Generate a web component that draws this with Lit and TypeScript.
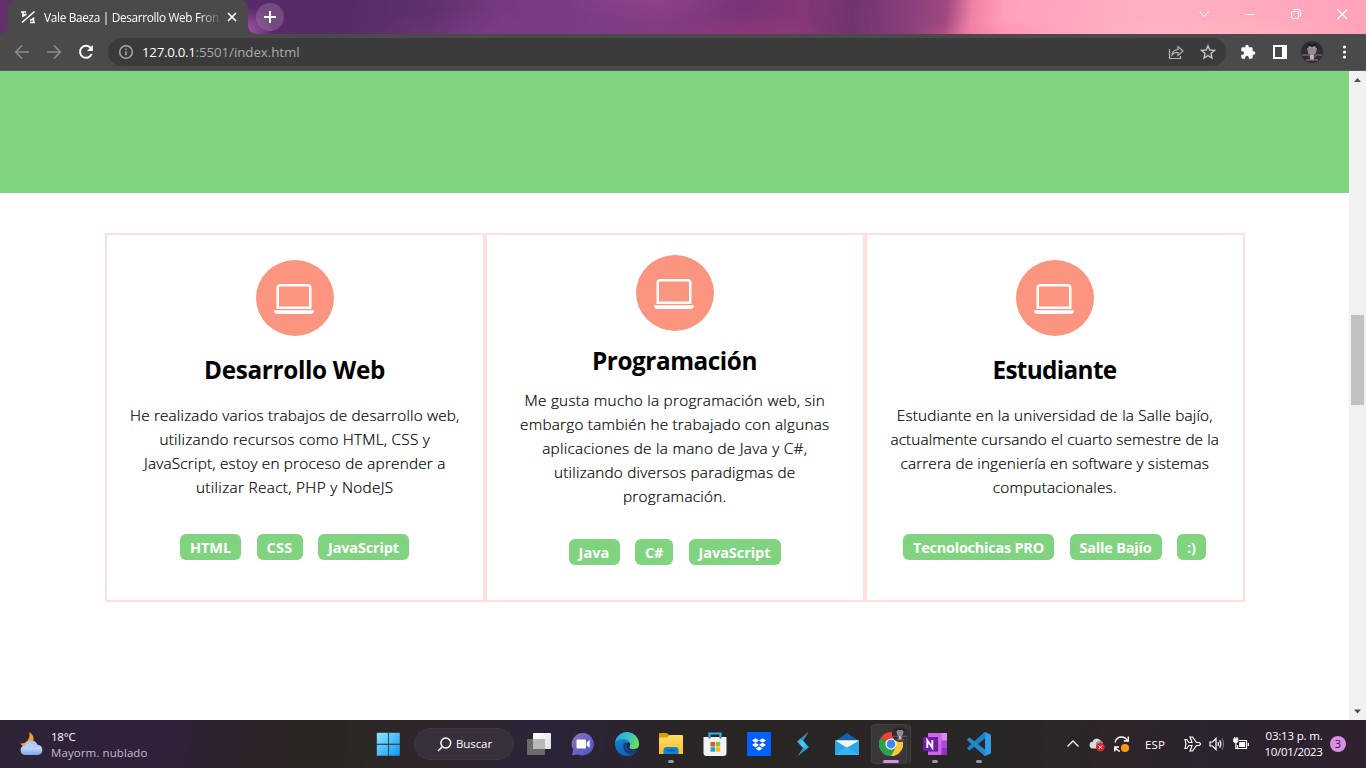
import { LitElement, html, svg, css } from "lit";
import { customElement, property } from "lit/decorators.js";

/** A single line of text whose tracking is adjusted to a given measure. */
@customElement("fit-text")
class FitText extends LitElement {
  @property({ type: Number }) measure = 0;
  @property() text = "";

  static styles = css`
    :host { display: block; width: max-content; white-space: pre; }
    .t { display: inline-block; }
  `;

  render() {
    return html`<span class="t">${this.text}</span>`;
  }

  firstUpdated() {
    const span = this.renderRoot.querySelector(".t") as HTMLElement;
    const natural = span.getBoundingClientRect().width;
    const spacing = (this.measure - natural) / this.text.length;
    span.style.letterSpacing = spacing.toFixed(3) + "px";
  }
}

type Line = [string, number];
interface Card { title: Line; lines: Line[]; tags: [string, number][]; tight?: boolean }

const CARDS: Card[] = [
  {
    title: ["Desarrollo Web", 181],
    lines: [
      ["He realizado varios trabajos de desarrollo web,", 329.5],
      ["utilizando recursos como HTML, CSS y", 270.5],
      ["JavaScript, estoy en proceso de aprender a", 301.5],
      ["utilizar React, PHP y NodeJS", 197.5],
    ],
    tags: [["HTML", 61], ["CSS", 46], ["JavaScript", 91]],
  },
  {
    title: ["Programación", 165],
    lines: [
      ["Me gusta mucho la programación web, sin", 300.5],
      ["embargo también he trabajado con algunas", 309.5],
      ["aplicaciones de la mano de Java y C#,", 265],
      ["utilizando diversos paradigmas de", 241.5],
      ["programación.", 103.5],
    ],
    tags: [["Java", 51], ["C#", 38], ["JavaScript", 92]],
    tight: true,
  },
  {
    title: ["Estudiante", 124],
    lines: [
      ["Estudiante en la universidad de la Salle bajío,", 316],
      ["actualmente cursando el cuarto semestre de la", 328.5],
      ["carrera de ingeniería en software y sistemas", 308.5],
      ["computacionales.", 124],
    ],
    tags: [["Tecnolochicas PRO", 151], ["Salle Bajío", 92], [":)", 29]],
  },
];

const laptop = svg`<svg width="40" height="40" viewBox="0 0 16 16" fill="#fff">
  <path d="M13.5 3a.5.5 0 0 1 .5.5V11H2V3.5a.5.5 0 0 1 .5-.5h11zm-11-1A1.5 1.5 0 0 0 1 3.5V12h14V3.5A1.5 1.5 0 0 0 13.5 2h-11zM0 12.5h16a1.5 1.5 0 0 1-1.5 1.5h-13A1.5 1.5 0 0 1 0 12.5z"/></svg>`;

const portrait = svg`
  <circle cx="11" cy="11" r="11" fill="#302c33"/>
  <path d="M5 6l3-3 3 1 3-1 3 3-1 3H6z" fill="#1b1a1f"/>
  <path d="M6 7q5-2 10 0l-1 5-4 5-4-5z" fill="#94898f"/>
  <path d="M7.500 6h2.500M12 6h2.500" stroke="#d5ccd0" stroke-width="1"/>
  <path d="M1 14h6l3 2h3l3-2h5" stroke="#6b6168" stroke-width="1.500" fill="none"/>
  <path d="M9.500 14h3l.5 4.500h-4z" fill="#c9bfc6"/>
  <path d="M5 19h12" stroke="#877c84" stroke-width="1.200"/>`;

@customElement("browser-bar")
class BrowserBar extends LitElement {
  static styles = css`
    :host { display: block; font-family: "Open Sans", "Noto Sans", sans-serif; }
    svg { display: block; flex: none; }
    .strip {
      height: 34px; display: flex; align-items: flex-start; box-sizing: border-box;
      background:
        radial-gradient(ellipse 150px 18px at 1230px 34px, rgba(255,190,190,.45), transparent),
        radial-gradient(ellipse 80px 16px at 990px 36px, rgba(255,120,165,.35), transparent),
        radial-gradient(ellipse 90px 26px at 750px 38px, rgba(165,62,125,.5), transparent),
        radial-gradient(ellipse 90px 26px at 645px -4px, rgba(165,72,152,.4), transparent),
        radial-gradient(ellipse 110px 28px at 470px 38px, rgba(140,66,145,.3), transparent),
        radial-gradient(ellipse 25px 22px at 249px 30px, rgba(160,88,168,.9), transparent),
        linear-gradient(96deg, #65306f 0, #5a2a68 240px, #552a69 330px, #60306f 430px, #773a80 500px, #7c3d85 600px, #843d84 660px, #7a3378 740px, #833777 800px, #71346f 850px, #8c407e 910px, #a1487f 942px, #ef80a5 968px, #ffa0ba 1000px, #ffb0c3 1150px, #ffa2ba 1366px);
    }
    .tab {
      position: relative; box-sizing: border-box; width: 240px; height: 34px; margin-left: 8px;
      padding: 0 10px 0 12px; border-radius: 8px 8px 0 0; background: #4a4a4a;
      display: flex; align-items: center; color: #fff;
    }
    .tab::before, .tab::after { content: ""; position: absolute; bottom: 0; width: 8px; height: 8px; }
    .tab::before { left: -8px; background: radial-gradient(circle at 0 0, transparent 7.500px, #4a4a4a 8px); }
    .tab::after { right: -8px; background: radial-gradient(circle at 100% 0, transparent 7.500px, #4a4a4a 8px); }
    .title {
      width: 176px; margin: 0 7px 0 8px; font-size: 11.800px; line-height: 16px;
      mask-image: linear-gradient(90deg, #000 154px, transparent 178px);
    }
    .plus {
      width: 28px; height: 28px; border-radius: 50%; margin: 3px 0 0 8px;
      background: rgba(160,130,170,.38); display: grid; place-items: center;
    }
    .win { margin: 7px 17px 0 auto; display: flex; gap: 32px; }
    .tools {
      height: 37px; box-sizing: border-box; background: #4a4a4a; border-bottom: 1px solid #5b575b;
      display: flex; align-items: center; padding: 0 14px;
    }
    .nav { display: flex; gap: 16px; }
    .url {
      flex: 1; height: 28px; margin: 0 14px; border-radius: 14px; background: #3b3b3b;
      display: flex; align-items: center; padding: 0 10px; box-sizing: border-box;
      font-size: 13.300px; line-height: 18px; color: #a9a9a9;
    }
    .info { margin-right: 8px; }
    .host { color: #fff; }
    .acts { margin-left: auto; display: flex; gap: 16px; }
    .exts { display: flex; gap: 16px; align-items: center; }
    .me { margin: 0 -3px; }
  `;

  render() {
    return html`
      <div class="strip">
        <div class="tab">
          <svg width="16" height="16" viewBox="0 0 16 16" fill="none" stroke="#fff" stroke-width="1.600">
            <path d="M14.500 2.500L2 13.500M1 3h5M3 3v4l3.500-2M15 13.500h-5M13.500 13V9.500L10 11.500"/>
          </svg>
          <div class="title"><fit-text .text=${"Vale Baeza | Desarrollo Web Fron"} .measure=${175}></fit-text></div>
          <svg width="10" height="10" viewBox="0 0 10 10" stroke="#fff" stroke-width="1.700"><path d="M1 1l8 8M9 1L1 9"/></svg>
        </div>
        <div class="plus"><svg width="12" height="12" viewBox="0 0 12 12" stroke="#fff" stroke-width="2"><path d="M6 0v12M0 6h12"/></svg></div>
        <div class="win">
          <svg width="14" height="14" viewBox="0 0 14 14" fill="none" stroke="#fff"><path d="M2.500 4.500l4.700 5 4.700-5"/></svg>
          <svg width="14" height="14" viewBox="0 0 14 14" fill="none" stroke="#fff"><path d="M2.500 7.500h9.500"/></svg>
          <svg width="14" height="14" viewBox="0 0 14 14" fill="none" stroke="#fff"><rect x="2.500" y="4.500" width="7" height="7" rx="1.300"/><path d="M4.500 2.500h5q2 0 2 2v5"/></svg>
          <svg width="14" height="14" viewBox="0 0 14 14" fill="none" stroke="#fff" stroke-width="1.200"><path d="M2.500 2.500l9.500 9.500M12 2.500L2.500 12"/></svg>
        </div>
      </div>
      <div class="tools">
        <div class="nav">
          <svg width="16" height="16" viewBox="0 0 16 16" fill="none" stroke="#8b8b8b" stroke-width="1.700"><path d="M15 8H2M8 1.500L1.700 8 8 14.500"/></svg>
          <svg width="16" height="16" viewBox="0 0 16 16" fill="none" stroke="#8b8b8b" stroke-width="1.700"><path d="M1 8h13M8 1.500L14.300 8 8 14.500"/></svg>
          <svg width="16" height="16" viewBox="0 0 16 16" fill="none" stroke="#fff" stroke-width="2"><path d="M13.600 10A6 6 0 1 1 12.400 3.700L14 5.500"/><path d="M14.800 1v6H9z" fill="#fff" stroke="none"/></svg>
        </div>
        <div class="url">
          <svg class="info" width="16" height="16" viewBox="0 0 16 16" fill="none" stroke="#a9a9a9" stroke-width="1.500"><circle cx="8" cy="8" r="6.300"/><path d="M8 7.300v4M8 4.400v1.500"/></svg>
          <fit-text class="host" .text=${"127.0.0.1"} .measure=${53.5}></fit-text><fit-text .text=${":5501/index.html"} .measure=${104}></fit-text>
          <div class="acts">
            <svg width="16" height="16" viewBox="0 0 16 16" fill="none" stroke="#b8b8b8" stroke-width="1.200"><path d="M1.500 5v9.500H12.500V12"/><path d="M4 11q.5-5 6-5.500V2.500L15 7l-5 4.500v-3q-4-.3-6 2.500z"/></svg>
            <svg width="16" height="16" viewBox="0 0 16 16" fill="none" stroke="#c4c4c4" stroke-width="1.400"><path d="M8 1.800l1.800 4.200 4.700.4-3.500 3.100 1 4.600L8 11.600 4 14.100l1-4.600L1.500 6.400 6.200 6z"/></svg>
          </div>
        </div>
        <div class="exts">
          <svg width="16" height="16" viewBox="0 0 24 24" fill="#fff"><path d="M20.500 11H19V7a2 2 0 0 0-2-2h-4V3.500a2.500 2.500 0 0 0-5 0V5H4a2 2 0 0 0-2 2v3.800h1.500a2.700 2.700 0 0 1 0 5.400H2V20a2 2 0 0 0 2 2h3.800v-1.500a2.700 2.700 0 0 1 5.400 0V22H17a2 2 0 0 0 2-2v-4h1.500a2.500 2.500 0 0 0 0-5z"/></svg>
          <svg width="16" height="16" viewBox="0 0 16 16"><path fill="#fff" fill-rule="evenodd" d="M1 1h14v14H1zM3 3v10h7V3z"/></svg>
          <svg class="me" width="22" height="22" viewBox="0 0 22 22">${portrait}</svg>
          <svg width="16" height="16" viewBox="0 0 16 16" fill="#fff"><circle cx="8.500" cy="3" r="1.600"/><circle cx="8.500" cy="8" r="1.600"/><circle cx="8.500" cy="13" r="1.600"/></svg>
        </div>
      </div>`;
  }
}

@customElement("task-bar")
class TaskBar extends LitElement {
  static styles = css`
    :host {
      box-sizing: border-box; height: 48px; display: flex; align-items: center; color: #fff;
      font-family: "Open Sans", "Noto Sans", sans-serif; font-size: 11.500px; line-height: 16px;
      background: linear-gradient(97deg, #2d2434 0, #30203a 100px, #30203a 170px, #2c2325 265px, #2a2723 340px, #30252a 440px, #2b2338 535px, #2a2433 600px, #2a2525 680px, #292626 1000px, #2d2529 1110px, #2b232f 1220px, #2f2030 1366px);
    }
    svg { display: block; flex: none; }
    .weather { width: 346px; flex: none; padding-left: 20px; display: flex; gap: 7px; align-items: center; }
    .temps { padding-top: 2px; }
    .soft { color: #c3bdc6; }
    .slot { width: 44px; height: 48px; flex: none; display: grid; place-items: center; position: relative; }
    .slot svg { position: relative; }
    .run::after { content: ""; position: absolute; left: 19px; top: 40px; width: 6px; height: 3px; border-radius: 2px; background: #9b979b; }
    .active::before {
      content: ""; box-sizing: border-box; position: absolute; left: 2px; top: 4px; width: 36px; height: 40px; border-radius: 4px;
      background: #393737; border: 1px solid #434141; box-shadow: 3px 0 0 #343131, 4px 0 0 #403d3d;
    }
    .active::after { content: ""; position: absolute; left: 14px; top: 40px; width: 16px; height: 3px; border-radius: 2px; background: #d88de0; }
    .face { position: absolute !important; left: 23px; top: 6px; }
    .search {
      width: 100px; height: 32px; box-sizing: border-box; border-radius: 16px; margin: 0 3px 0 4px; flex: none;
      padding-left: 22px; background: #38303a; border: 1px solid #403741; display: flex; align-items: center; gap: 4px;
    }
    .tray { display: flex; align-items: center; margin-left: auto; padding-right: 20px; }
    .tray > svg { margin: 0 4px; }
    .tray > .plane { margin-left: 1px; }
    .lang { margin: 1px 18px 0 11px; }
    .clock { display: flex; flex-direction: column; align-items: flex-end; margin: 0 7.500px 0 11.500px; }
    .badge { width: 16px; height: 16px; border-radius: 50%; background: #d98fe3; color: #2a1f2d; text-align: center; font-size: 11px; line-height: 16px; flex: none; }
  `;

  render() {
    return html`
      <div class="weather">
        <svg width="24" height="24" viewBox="0 0 24 24">
          <defs><linearGradient id="cl" x2="0" y2="1"><stop stop-color="#a6c4f7"/><stop offset=".55" stop-color="#bcd2f9"/><stop offset="1" stop-color="#77a4ef"/></linearGradient></defs>
          <path d="M9.500 0Q14 3 13.500 8 12 14 5 14.500 2 14 0 11.500 5 12 8 8 10 5 9.500 0z" fill="#f5a21c"/>
          <path d="M5 23a4.800 4.800 0 0 1-.5-9.500Q6 8.500 11 8.500q5 0 6.500 4.300a5.200 5.200 0 0 1 1 10.200z" fill="url(#cl)"/>
        </svg>
        <div class="temps">
          <fit-text .text=${"18°C"} .measure=${24.5}></fit-text>
          <fit-text class="soft" .text=${"Mayorm. nublado"} .measure=${96.5}></fit-text>
        </div>
      </div>
      <div class="slot">
        <svg width="24" height="24" viewBox="0 0 24 24">
          <defs><linearGradient id="wn" x2="1" y2="1"><stop stop-color="#8fe5ff"/><stop offset="1" stop-color="#0b97f5"/></linearGradient></defs>
          <path fill="url(#wn)" d="M1.500 .8H12v11H.800V1.500zM12.800.8h11v11h-11zM.8 12.700H12v11H.8zM12.800 12.700h11v11h-11z"/>
        </svg>
      </div>
      <div class="search">
        <svg width="15" height="15" viewBox="0 0 15 15" fill="none" stroke="#fff" stroke-width="1.500"><circle cx="8.800" cy="6" r="4.900"/><path d="M5.300 9.700L1 14"/></svg>
        <fit-text .text=${"Buscar"} .measure=${36}></fit-text>
      </div>
      <div class="slot">
        <svg width="24" height="24" viewBox="0 0 24 24">
          <defs><linearGradient id="tv" x2="1" y2="1"><stop stop-color="#fff"/><stop offset="1" stop-color="#dedede"/></linearGradient></defs>
          <rect x="6" y="1" width="18" height="16" rx=".8" fill="url(#tv)"/><rect y="7" width="18" height="16" rx=".8" fill="#6c6a6a"/><path d="M6 7h12v10H6z" fill="#b8b8b8"/>
        </svg>
      </div>
      <div class="slot">
        <svg width="24" height="24" viewBox="0 0 24 24">
          <defs><linearGradient id="ch" x2="1" y2="1"><stop stop-color="#9a72b4"/><stop offset=".5" stop-color="#6a63c4"/><stop offset="1" stop-color="#4e55c8"/></linearGradient></defs>
          <path d="M12 1a11.200 11.200 0 1 1-5 21.400L.800 23.200 2.300 18A11.200 11.200 0 0 1 12 1z" fill="url(#ch)"/>
          <rect x="5.500" y="7.500" width="9.500" height="9" rx="1" fill="#fff"/><path d="M15.700 10.500l3-2.500v8l-3-2.500z" fill="#fff"/>
        </svg>
      </div>
      <div class="slot">
        <svg width="24" height="24" viewBox="0 0 24 24">
          <defs>
            <linearGradient id="e1" y1=".2" x2="1" y2=".4"><stop stop-color="#2aa7e3"/><stop offset=".6" stop-color="#38c7c0"/><stop offset="1" stop-color="#6ee04b"/></linearGradient>
            <linearGradient id="e2" x2="0" y2="1"><stop stop-color="#1891dc"/><stop offset="1" stop-color="#0f62b4"/></linearGradient>
          </defs>
          <circle cx="12" cy="12" r="12" fill="url(#e2)"/>
          <path d="M.2 10A12 12 0 0 1 24 12q0 5-5.500 5.200-4.500 0-4.300-2 1.600-1.800.8-4.200Q13.300 7 8.500 7 3 7 .2 10z" fill="url(#e1)"/>
          <path d="M8.500 12Q7 20 14.500 22.500 20 22.500 22.700 17.700 14 21 11.500 16q-1.200-3 1.500-5-3.500-1-4.500 1z" fill="#123f87"/>
          <path d="M14.200 15.300q1.500-2 .7-4.300l-2-.8q-2 2.300-1.200 5.500 2.500 4.800 11 2 .8-.7.3-1.500-8 3-8.800-.9z" fill="#2a2433"/>
        </svg>
      </div>
      <div class="slot run">
        <svg width="24" height="24" viewBox="0 0 24 24">
          <defs><linearGradient id="fo" x2="0" y2="1"><stop stop-color="#ffdc6b"/><stop offset="1" stop-color="#fdbf25"/></linearGradient></defs>
          <path d="M0 2q0-1 1-1h7l2.500 2.500V7H0z" fill="#d99a0b"/>
          <path d="M0 5.500h8L10.500 3H23q1 0 1 1v18H0z" fill="url(#fo)"/>
          <path d="M4.500 22v-4q0-3 3-3h9q3 0 3 3v4z" fill="#1482d4"/><path d="M8 18.500h8" stroke="#0a5aa3" stroke-width="1.500"/>
        </svg>
      </div>
      <div class="slot">
        <svg width="24" height="24" viewBox="0 0 24 24">
          <path d="M6.500 7V1.500h11V7" fill="none" stroke="#39b3e6" stroke-width="2.200"/>
          <path d="M.5 5h23v16q0 3-3 3h-17q-3 0-3-3z" fill="#f3f3f3"/><path d="M5.500 5h2v1.500h-2zM16.500 5h2v1.500h-2z" fill="#1476b9"/>
          <path d="M7.500 10h4.500v4.500H7.500z" fill="#f1511b"/><path d="M12.700 10h4.500v4.500h-4.500z" fill="#80cc28"/><path d="M7.500 15.200h4.500v4.500H7.500z" fill="#00adef"/><path d="M12.700 15.200h4.500v4.500h-4.500z" fill="#fbbc09"/>
        </svg>
      </div>
      <div class="slot">
        <svg width="24" height="24" viewBox="0 0 24 24"><path d="M0 0h24v24H0z" fill="#0061fe"/><path fill="#fff" d="M8.500 6.200l3.500 2.200-3.500 2.300L5 8.400zM15.500 6.200L19 8.400l-3.500 2.300L12 8.400zM8.500 10.700l3.500 2.200-3.500 2.300L5 12.900zM15.500 10.700l3.500 2.200-3.500 2.300-3.500-2.300zM12 14.500l3.500 2-3.500 2.200-3.500-2.200z"/></svg>
      </div>
      <div class="slot">
        <svg width="24" height="24" viewBox="0 0 24 24">
          <defs><linearGradient id="st" x2="1" y2="1"><stop stop-color="#2a7fd8"/><stop offset=".5" stop-color="#45d3ec"/><stop offset="1" stop-color="#1b6fd0"/></linearGradient></defs>
          <path d="M17.500 0L6 9.500 12 16 7 23.800l11-8.500-6-6.500z" fill="url(#st)"/><path d="M17.500 0L9 7l3 1.500zM7 23.800l3-5 2.500-2.500 1.500 1z" fill="#2b5f96" opacity=".6"/>
        </svg>
      </div>
      <div class="slot">
        <svg width="24" height="24" viewBox="0 0 24 24">
          <path d="M0 9L12 1l12 8v5H0z" fill="#1260ae"/><path d="M0 8.500h24L12 18z" fill="#f4f4f4"/><path d="M12 15.500l12-7V23H0V8.500z" fill="#28a8ea"/><path d="M0 23l12-8 12 8z" fill="#35b8f1"/><path d="M2 8.500h22L11.500 15.400z" fill="#f4f4f4"/>
        </svg>
      </div>
      <div class="slot active">
        <svg width="24" height="24" viewBox="0 0 24 24">
          <path d="M12 12L1.600 6A12 12 0 0 1 22.400 6z" fill="#e94436"/><path d="M12 12l10.400-6A12 12 0 0 1 12 24z" fill="#fcc934"/><path d="M12 12v12A12 12 0 0 1 1.600 6z" fill="#2da04d"/>
          <path d="M12 6.500h10.700A12 12 0 0 1 12 24l5-9z" fill="#fcc934"/><path d="M1.600 6L7 15l5 3 5-3-5 9A12 12 0 0 1 1.600 6z" fill="#2da04d"/>
          <circle cx="12" cy="12" r="5.600" fill="#fff"/><circle cx="12" cy="12" r="4.400" fill="#4285f4"/>
        </svg>
        <svg class="face" width="16" height="16" viewBox="0 0 22 22">${portrait}</svg>
      </div>
      <div class="slot run">
        <svg width="24" height="24" viewBox="0 0 24 24">
          <path d="M5 1h19v22H5z" fill="#ca64ea"/><path d="M18.500 1H24v7.500h-5.500z" fill="#d98bf0"/><path d="M18.500 8.500H24V16h-5.500z" fill="#ae4bd5"/><path d="M18.500 16H24v7h-5.500z" fill="#9332bf"/>
          <path d="M5 5h10v14.500H5z" fill="#562080"/><rect y="5" width="14" height="14" rx="1" fill="#7719aa"/>
          <path d="M4.300 16V8.300l5 7.300V8" fill="none" stroke="#fff" stroke-width="1.900"/>
        </svg>
      </div>
      <div class="slot run">
        <svg width="24" height="24" viewBox="0 0 24 24">
          <path d="M18 0l5 2.300q1 .5 1 1.500v16.500q0 1-1 1.500L18 24z" fill="#2f9fe5"/>
          <path d="M18 0v6.500L2.500 18.500.500 17q-.8-.7 0-1.500L17 .5z" fill="#1b80c4"/><path d="M18 24v-6.500L2.500 5.500.5 7q-.8.700 0 1.500L17 23.500z" fill="#2489ca"/>
        </svg>
      </div>
      <div class="tray">
        <svg width="16" height="16" viewBox="0 0 16 16" fill="none" stroke="#fff" stroke-width="1.300"><path d="M2.500 10.500L8 5l5.500 5.500"/></svg>
        <svg width="16" height="16" viewBox="0 0 16 16"><path d="M4.500 12.500a3.500 3.500 0 0 1-.8-7Q5 2.500 8 2.500q2.500 0 4 2.500l2 2-4 5.500z" fill="#d9d9d9"/><path d="M7 6.500l5-2 2 2.500-3 5H7z" fill="#8f8f8f"/><circle cx="11.400" cy="11.200" r="4.300" fill="#d7242e"/><path d="M9.800 9.600l3.200 3.200M13 9.600l-3.200 3.200" stroke="#fff" stroke-width="1"/></svg>
        <svg width="17" height="18" viewBox="0 0 17 18" fill="none" stroke="#fff" stroke-width="1.300"><path d="M2 7.500Q3.500 2 8.500 2q4 0 6.200 4M15.300 1.500V6h-4.500M7 16.300Q3.500 15.500 2 12M1.700 16.500V12H6"/><circle cx="12" cy="13" r="4.100" fill="#f99a0c" stroke="none"/></svg>
        <fit-text class="lang" .text=${"ESP"} .measure=${20}></fit-text>
        <svg class="plane" width="17" height="16" viewBox="0 0 17 16" fill="none" stroke="#fff" stroke-width="1.200"><path d="M1 3.500h1.800L5 6.500h3L6 1h2.500l4 5.500H15q3 1.500 0 3h-2.500L8.500 15H6l2-5.500H5l-2.200 3H1l1-4.500z"/></svg>
        <svg width="16" height="16" viewBox="0 0 16 16" fill="none" stroke="#fff" stroke-width="1.200"><path d="M1 6h2.500L7 2.500v11L3.500 10H1zM9 6q1 2 0 4M10.800 4.300q2 3.700 0 7.400"/><path d="M13 2.500q3 5.500 0 11" stroke="#77717a"/></svg>
        <svg width="16" height="16" viewBox="0 0 16 16" fill="none" stroke="#fff" stroke-width="1.200"><path d="M6 4.500h7.500v8h-9V9M15.300 7v3"/><path d="M6.500 6h5.500v5h-6V8z" fill="#fff" stroke="none"/><path d="M.8 3h4v2.500q-2 2.500-4 0z" fill="#fff"/><path d="M1.800 1V3M4 1V3M2.800 7v5.500h2"/></svg>
        <div class="clock">
          <fit-text .text=${"03:13 p. m."} .measure=${57}></fit-text>
          <fit-text .text=${"10/01/2023"} .measure=${58}></fit-text>
        </div>
        <div class="badge">3</div>
      </div>`;
  }
}

@customElement("app-root")
class AppRoot extends LitElement {
  static styles = css`
    :host {
      width: 1366px; height: 768px; display: flex; flex-direction: column; overflow: hidden;
      background: #fff; color: #000; font-family: "Open Sans", "Noto Sans", sans-serif;
    }
    svg { display: block; }
    .view { flex: 1; display: flex; min-height: 0; }
    .page { flex: 1; }
    .band { height: 122px; background: #80d480; }
    .cards { display: grid; grid-template-columns: repeat(3, 380px); margin: 40px 0 0 105px; }
    .card {
      box-sizing: border-box; height: 369px; border: 2px solid #ffe0dc; padding-top: 25px;
      display: flex; flex-direction: column; align-items: center;
    }
    .tight { padding-top: 20px; }
    .disc {
      box-sizing: border-box; width: 78px; height: 76px; padding: 1px 2px 0 0; border-radius: 50%;
      background: #fc957f; display: grid; place-items: center; flex: none;
    }
    .title { margin: 18px 1px 17px 0; font-size: 24.300px; line-height: 32px; font-weight: 700; }
    .tight .title { margin: 14px 1px 11px 0; }
    .copy {
      display: flex; flex-direction: column; align-items: center; margin-right: .5px;
      font-size: 15.300px; line-height: 24px; font-weight: 350; -webkit-text-stroke: .2px #000;
    }
    .tags { display: flex; gap: 15.500px; margin: 35px 1px 0 0; }
    .tight .tags { margin-top: 31px; }
    .tag {
      box-sizing: border-box; height: 26px; padding-left: 10px; border-radius: 6px; background: #80d480;
      color: #fff; font-size: 14.500px; line-height: 27px; font-weight: 700;
    }
    .scroll { width: 17px; background: #f1f1f1; display: flex; flex-direction: column; align-items: center; }
    .thumb { width: 13px; height: 90px; background: #c1c1c1; margin: 227px 0 auto; }
  `;

  render() {
    return html`
      <browser-bar></browser-bar>
      <div class="view">
        <div class="page">
          <div class="band"></div>
          <div class="cards">
            ${CARDS.map((c) => html`
              <div class="card ${c.tight ? "tight" : ""}">
                <div class="disc">${laptop}</div>
                <fit-text class="title" .text=${c.title[0]} .measure=${c.title[1]}></fit-text>
                <div class="copy">${c.lines.map(([t, w]) => html`<fit-text .text=${t} .measure=${w}></fit-text>`)}</div>
                <div class="tags">${c.tags.map(([t, w]) => html`
                  <div class="tag" style="width:${w}px"><fit-text .text=${t} .measure=${w - 20}></fit-text></div>`)}
                </div>
              </div>`)}
          </div>
        </div>
        <div class="scroll">
          <svg width="17" height="17" viewBox="0 0 17 17"><path d="M5 11l3.500-4 3.500 4z" fill="#505050"/></svg>
          <div class="thumb"></div>
          <svg width="17" height="17" viewBox="0 0 17 17"><path d="M5 6.500l3.500 4 3.500-4z" fill="#505050"/></svg>
        </div>
      </div>
      <task-bar></task-bar>`;
  }
}
